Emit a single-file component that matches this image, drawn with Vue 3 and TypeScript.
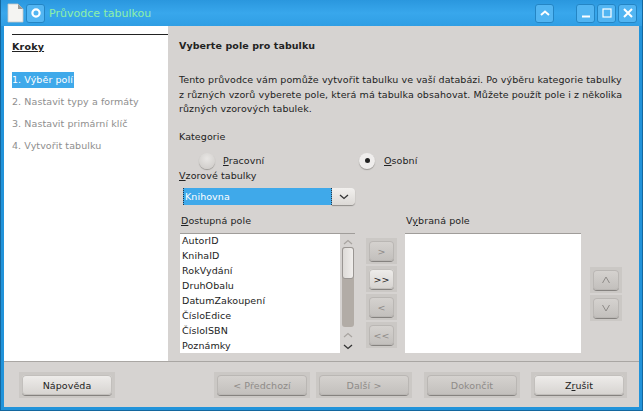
<script setup lang="ts">
const steps: string[] = ['1. Výběr polí', '2. Nastavit typy a formáty', '3. Nastavit primární klíč', '4. Vytvořit tabulku']
const fields: string[] = ['AutorID', 'KnihaID', 'RokVydání', 'DruhObalu', 'DatumZakoupení', 'ČísloEdice', 'ČísloISBN', 'Poznámky']
const moves = [
  { label: '>', off: true },
  { label: '>>', off: false },
  { label: '<', off: true },
  { label: '<<', off: true },
]
</script>

<template>
  <div class="win">
    <header class="title">
      <svg class="doc" width="17" height="20" viewBox="0 0 17 20">
        <path d="M1 1h10l5 5v13H1z" fill="#f4f4f2" stroke="#c8c8c4" stroke-width=".8" />
        <path d="M11 1v5h5z" fill="#9a9a98" />
      </svg>
      <span class="appbtn">
        <svg width="12" height="12" viewBox="0 0 12 12"><circle cx="6" cy="6" r="3.6" fill="none" stroke="#fff" stroke-width="2.2" /></svg>
      </span>
      <span class="wtitle">Průvodce tabulkou</span>
      <span class="wbtn shade">
        <svg width="10" height="6" viewBox="0 0 10 6"><path d="M1 5l4-3.5L9 5" fill="none" stroke="#fff" stroke-width="2" /></svg>
      </span>
      <span class="wbtn">
        <svg width="10" height="10" viewBox="0 0 10 10"><path d="M1 8.5h8" stroke="#fff" stroke-width="2" /></svg>
      </span>
      <span class="wbtn">
        <svg width="10" height="10" viewBox="0 0 10 10"><rect x="1" y="1" width="8" height="8" fill="none" stroke="#fff" stroke-width="1.2" /></svg>
      </span>
      <span class="wbtn">
        <svg width="10" height="10" viewBox="0 0 10 10"><path d="M1 1l8 8M9 1l-8 8" stroke="#fff" stroke-width="2" /></svg>
      </span>
    </header>
    <div class="client">
      <div class="main">
        <aside class="side">
          <div class="rule"></div>
          <div class="kroky"><u>Kroky</u></div>
          <ol class="steps">
            <li v-for="(s, i) in steps" :key="s" :class="{ cur: i === 0 }"><span>{{ s }}</span></li>
          </ol>
        </aside>
        <section class="page">
          <h1>Vyberte pole pro tabulku</h1>
          <p>Tento průvodce vám pomůže vytvořit tabulku ve vaší databázi. Po výběru kategorie tabulky<br />z různých vzorů vyberete pole, která má tabulka obsahovat. Můžete použít pole i z několika<br />různých vzorových tabulek.</p>
          <div class="cat">Kategorie</div>
          <div class="radios">
            <label class="r1"><i class="radio"></i><span><u>P</u>racovní</span></label>
            <label class="r2"><i class="radio on"></i><span><u>O</u>sobní</span></label>
          </div>
          <div class="vz"><u>V</u>zorové tabulky</div>
          <div class="combo">
            <div class="cval">Knihovna</div>
            <div class="cbtn">
              <svg width="10" height="6" viewBox="0 0 10 6"><path d="M1 1l4 3.5L9 1" fill="none" stroke="#333" stroke-width="1.3" /></svg>
            </div>
          </div>
          <div class="pick">
            <div class="col-a">
              <div class="lab"><u>D</u>ostupná pole</div>
              <div class="list">
                <ul>
                  <li v-for="f in fields" :key="f">{{ f }}</li>
                </ul>
                <div class="sb">
                  <svg width="10" height="6" viewBox="0 0 10 6"><path d="M1 5l4-3.5L9 5" fill="none" stroke="#a8a4a0" stroke-width="1.2" /></svg>
                  <div class="track"><div class="thumb"></div></div>
                  <svg width="10" height="6" viewBox="0 0 10 6"><path d="M1 5l4-3.5L9 5" fill="none" stroke="#a8a4a0" stroke-width="1.2" /></svg>
                  <svg class="dn" width="10" height="6" viewBox="0 0 10 6"><path d="M1 1l4 3.5L9 1" fill="none" stroke="#333" stroke-width="1.3" /></svg>
                </div>
              </div>
            </div>
            <div class="moves">
              <div v-for="m in moves" :key="m.label" class="halo">
                <button class="btn mv" :class="{ off: m.off }">{{ m.label }}</button>
              </div>
            </div>
            <div class="col-b">
              <div class="lab">V<u>y</u>braná pole</div>
              <div class="list"></div>
            </div>
            <div class="order">
              <div class="halo">
                <button class="btn ord off" aria-label="Nahoru">
                  <svg width="10" height="8" viewBox="0 0 10 8"><path d="M1.5 7L5 1l3.5 6" fill="none" stroke="#8e8b88" /></svg>
                </button>
              </div>
              <div class="halo">
                <button class="btn ord off" aria-label="Dolů">
                  <svg width="10" height="8" viewBox="0 0 10 8"><path d="M1.5 1L5 7l3.5-6" fill="none" stroke="#8e8b88" /></svg>
                </button>
              </div>
            </div>
          </div>
        </section>
      </div>
      <footer class="foot">
        <div class="halo"><button class="btn fb">Nápověda</button></div>
        <div class="grow"></div>
        <div class="halo"><button class="btn fb off">&lt; Předchozí</button></div>
        <div class="halo m6"><button class="btn fb off">Další &gt;</button></div>
        <div class="halo m12"><button class="btn fb off">Dokončit</button></div>
        <div class="halo m11"><button class="btn fb">Z<u>r</u>ušit</button></div>
      </footer>
    </div>
  </div>
</template>

<style>
html, body { margin: 0; padding: 0; background: #1f88c8; }
</style>

<style scoped>
.win {
  width: 643px;
  height: 411px;
  box-sizing: border-box;
  background: #2193da;
  box-shadow: inset 0 0 0 1px #14679e;
  display: flex;
  flex-direction: column;
  padding: 0 4px 4px;
  font-family: "DejaVu Sans", sans-serif;
  font-size: 9.5px;
  letter-spacing: .08px;
  color: #222;
  overflow: hidden;
}
.title {
  height: 26px;
  flex: none;
  display: flex;
  align-items: center;
  margin: 0 -3px;
  padding: 0 5px 0 6px;
  background: linear-gradient(#2a97de, #38a7ec 50%, #2f9ee4);
}
.doc { margin-right: 2px; }
.appbtn {
  width: 17px; height: 17px;
  border-radius: 3px;
  background: #52b5f2;
  border: 1px solid #2485c4;
  display: flex; align-items: center; justify-content: center;
  margin-right: 4px;
}
.wtitle {
  color: #8ef0a8;
  font-size: 11px;
  letter-spacing: 0;
  flex: 1;
}
.wbtn {
  width: 17px; height: 17px;
  border-radius: 3px;
  background: #52b5f2;
  border: 1px solid #2485c4;
  display: flex; align-items: center; justify-content: center;
  margin-left: 2px;
}
.shade { margin-right: 20px; }
.client {
  flex: 1;
  display: flex;
  flex-direction: column;
  background: #d6d3d1;
}
.main {
  height: 335px;
  flex: none;
  box-sizing: content-box;
  display: flex;
  border-bottom: 1px solid #a9a6a3;
}
.side {
  width: 164px;
  background: #fff;
  padding: 8px 0 0 8px;
  box-sizing: border-box;
  flex: none;
}
.rule { height: 1px; background: #222; }
.kroky { font-weight: bold; margin-top: 4px; line-height: 15px; font-size: 9.5px; letter-spacing: .2px; }
.steps { list-style: none; margin: 18px 0 0; padding: 0; }
.steps li { height: 22px; line-height: 16px; color: #8e8e8e; }
.steps li span { display: inline-block; padding-right: 1px; }
.steps .cur span { background: #3fa9ea; color: #fff; height: 16px; }
.page {
  flex: 1;
  padding: 13px 0 0 11px;
  min-width: 0;
}
h1 { font-size: 9.5px; font-weight: bold; margin: 0; line-height: 13px; }
p { margin: 21px 0 0; line-height: 14.5px; white-space: nowrap; }
.cat { margin-top: 13.5px; line-height: 14px; }
.radios { display: flex; height: 15px; margin-top: 9px; align-items: center; }
.radios label { display: flex; align-items: center; gap: 8px; }
.r1 { width: 160px; margin-left: 20px; }
.r2 span { margin-left: 1px; }
.radio {
  width: 16px; height: 16px; border-radius: 50%;
  background: radial-gradient(circle at 50% 35%, #e8e6e4, #cbc8c5);
  box-shadow: 0 1px 1px #9a9794;
  position: relative;
}
.radio.on { background: #efedec; }
.radio.on::after {
  content: ""; position: absolute; left: 5.5px; top: 5.5px;
  width: 5px; height: 5px; border-radius: 50%; background: #222;
}
.vz { margin-top: 1px; line-height: 13px; }
.combo { display: flex; width: 172px; height: 17px; margin: 6px 0 0 4px; }
.cval {
  flex: 1; background: #3fa9ea; color: #fff; line-height: 17px; padding-left: 1px;
  border-left: 1px dotted #234; border-right: 1px dotted #234;
}
.cbtn {
  width: 23px;
  background: linear-gradient(#f2f0ee, #dcd9d6);
  border-radius: 0 4px 4px 0;
  box-shadow: 0 1px 1px #8f8c89;
  display: flex; align-items: center; justify-content: center;
}
.pick { display: flex; margin-top: 9px; }
.lab { line-height: 14px; height: 14px; margin-left: 1px; }
.col-a { width: 175px; margin-left: 1px; flex: none; }
.col-b { width: 176px; flex: none; }
.list {
  margin-top: 5px;
  height: 120px;
  display: flex;
  box-sizing: border-box;
  border-top: 1px solid #a09d9a;
  background: #fff;
}
ul { list-style: none; margin: -1px 0 0; padding: 0 0 0 2px; flex: 1; overflow: hidden; }
ul li { height: 15px; line-height: 15px; }
.sb {
  width: 15px; background: #d6d3d1; display: flex; flex-direction: column; align-items: center;
  padding-top: 5px; box-sizing: border-box;
}
.track {
  width: 12px; height: 80px; margin: 2px 0 5px; background: #b2aca6; border-radius: 3px; flex: none;
}
.thumb {
  width: 12px; height: 32px; box-sizing: border-box;
  background: linear-gradient(90deg, #dedbd8, #f0eeec);
  border: 1px solid #9a9693; border-radius: 3px;
}
.dn { margin-top: 6px; }
.moves {
  width: 50px; box-sizing: border-box; flex: none;
  display: flex; flex-direction: column; align-items: flex-start; gap: 2px;
  padding: 24px 0 0 11px;
}
.order {
  margin-left: 9px; flex: none;
  display: flex; flex-direction: column; gap: 2px;
  padding-top: 53px;
  align-self: flex-start;
}
.halo { background: #cbc8c5; padding: 3px; display: flex; flex: none; }
.btn {
  font: inherit;
  letter-spacing: inherit;
  color: #222;
  padding: 0;
  border: 0;
  height: 20px;
  border-radius: 4px;
  background: linear-gradient(#efedeb, #d6d3d0);
  box-shadow: inset 0 0 0 1px #c2bfbc, 0 1px 0 #85827f;
}
.btn.off { color: #8e8b88; background: linear-gradient(#d6d3d0, #c2bfbc); box-shadow: inset 0 0 0 1px #bab7b4, 0 1px 0 #85827f; }
.mv { width: 25px; }
.ord { width: 26px; display: flex; align-items: center; justify-content: center; }
.foot {
  flex: 1;
  display: flex;
  align-items: flex-start;
  padding: 10px 12px 0 15px;
}
.fb { width: 90px; }
.grow { flex: 1; }
.m6 { margin-left: 6px; }
.m12 { margin-left: 12px; }
.m11 { margin-left: 11px; }
</style>
